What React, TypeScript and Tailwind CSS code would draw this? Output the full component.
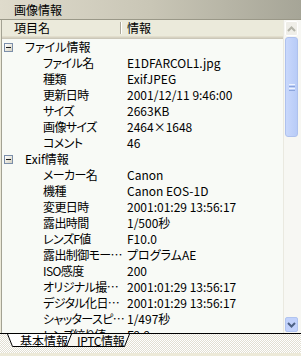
import React from "react";

type Group = { title: string; items: [string, string][] };

const groups: Group[] = [
  {
    title: "ファイル情報",
    items: [
      ["ファイル名", "E1DFARCOL1.jpg"],
      ["種類", "ExifJPEG"],
      ["更新日時", "2001/12/11 9:46:00"],
      ["サイズ", "2663KB"],
      ["画像サイズ", "2464×1648"],
      ["コメント", "46"],
    ],
  },
  {
    title: "Exif情報",
    items: [
      ["メーカー名", "Canon"],
      ["機種", "Canon EOS-1D"],
      ["変更日時", "2001:01:29 13:56:17"],
      ["露出時間", "1/500秒"],
      ["レンズF値", "F10.0"],
      ["露出制御モー…", "プログラムAE"],
      ["ISO感度", "200"],
      ["オリジナル撮…", "2001:01:29 13:56:17"],
      ["デジタル化日…", "2001:01:29 13:56:17"],
      ["シャッタースピ…", "1/497秒"],
      ["レンズ絞り値", "F9.9"],
    ],
  },
];

const MinusBox = () => (
  <div className="w-[9px] h-[9px] shrink-0 border border-[#7b8ea9] bg-gradient-to-br from-white to-[#d6d2c2] flex items-center justify-center">
    <div className="w-[5px] h-px bg-[#1c1c1c]" />
  </div>
);

const Scrollbar = () => (
  <div className="w-[18px] shrink-0 flex flex-col bg-[#f7f7f3] border-l border-[#eae9e0] pl-px pr-[3px]">
    <div className="mt-px h-[15px] rounded-[2px] border border-white bg-[#efeee8] flex items-center justify-center">
      <svg width="9" height="6" viewBox="0 0 9 6">
        <path d="M1 5 L4.5 1.5 L8 5" fill="none" stroke="#b3b3a8" strokeWidth="2" />
      </svg>
    </div>
    <div className="mt-px h-[100px] rounded-[3px] border border-[#aec1ee] bg-gradient-to-r from-[#c9d8fc] to-[#b8cbf7] flex flex-col items-center justify-center gap-px">
      <div className="w-[6px] h-px bg-[#eef3fe]" />
      <div className="w-[6px] h-px bg-[#8ca5dd]" />
      <div className="w-[6px] h-px bg-[#eef3fe]" />
      <div className="w-[6px] h-px bg-[#8ca5dd]" />
    </div>
    <div className="flex-1" />
    <div className="mb-px h-[15px] rounded-[2px] border border-[#b1c4ef] bg-[#c2d2fc] flex items-center justify-center">
      <svg width="9" height="6" viewBox="0 0 9 6">
        <path d="M1 1 L4.5 4.5 L8 1" fill="none" stroke="#4d6185" strokeWidth="2" />
      </svg>
    </div>
  </div>
);

const Tabs = () => (
  <div className="h-[23px] shrink-0 border-t border-black flex flex-col">
    <div className="h-[19px] bg-[image:repeating-conic-gradient(#e2dfd2_0_25%,#ffffff_0_50%)] bg-[length:2px_2px] flex pl-[7px]">
      <div className="relative z-10 w-[65px] h-[13px]">
        <svg className="absolute inset-0" width="65" height="13" viewBox="0 0 65 13">
          <polygon points="0,0 65,0 60,12.5 5,12.5" fill="#ffffff" />
          <polyline points="0.5,0 5.5,12.5 59.5,12.5 64.5,0" fill="none" stroke="#000" strokeWidth="1" />
        </svg>
        <div className="relative pl-[13px] leading-[13px]">基本情報</div>
      </div>
      <div className="relative -ml-[10px] w-[68px] h-[13px]">
        <svg className="absolute inset-0" width="68" height="13" viewBox="0 0 68 13">
          <polygon points="0,0 68,0 63,12.5 5,12.5" fill="#f7f6f1" />
          <polyline points="0.5,0 5.5,12.5 62.5,12.5 67.5,0" fill="none" stroke="#000" strokeWidth="1" />
        </svg>
        <div className="relative pl-[15px] leading-[13px] tracking-[-0.3px]">IPTC情報</div>
      </div>
    </div>
    <div className="h-[3px] bg-[#ece9d8]" />
  </div>
);

export default function App() {
  return (
    <div className="w-[301px] h-[356px] overflow-hidden bg-[#ece9d8] font-['Noto_Sans_CJK_JP',sans-serif] [font-feature-settings:'palt'] text-[12px] text-black flex flex-col">
      <div className="h-[20px] shrink-0 border-b border-[#9a9888] bg-gradient-to-r from-[#dfdbcc] via-[#c9c6b6] to-[#a6a597] pl-[14px] leading-[19px]">
        画像情報
      </div>

      <div className="flex h-[313px] shrink-0">
        <div className="flex-1 min-w-0 ml-px border-l border-[#a3a293] bg-[#f8faf6] overflow-hidden">
          <div className="bg-[#ebeadb]">
            <div className="h-[16px] flex items-center leading-[16px]">
              <div className="w-[118px] pl-[12px]">項目名</div>
              <div className="w-[2px] h-[12px] border-l border-[#aca899] border-r border-r-white" />
              <div className="pl-[5px]">情報</div>
            </div>
            <div className="h-px bg-[#e2decd]" />
            <div className="h-px bg-[#d6d2c2]" />
            <div className="h-px bg-[#cbc7b8]" />
          </div>

          {groups.map((g) => (
            <div key={g.title}>
              <div className="h-[16px] flex items-center leading-[16px] pl-[2px]">
                <MinusBox />
                <div className="pl-[12px] whitespace-nowrap">{g.title}</div>
              </div>
              {g.items.map(([name, value]) => (
                <div key={name} className="h-[16px] flex leading-[16px] whitespace-nowrap">
                  <div className="w-[122px] shrink-0 pl-[41px] tracking-[-0.6px]">{name}</div>
                  <div className="pl-[3px]">{value}</div>
                </div>
              ))}
            </div>
          ))}
        </div>
        <Scrollbar />
      </div>

      <Tabs />
    </div>
  );
}
